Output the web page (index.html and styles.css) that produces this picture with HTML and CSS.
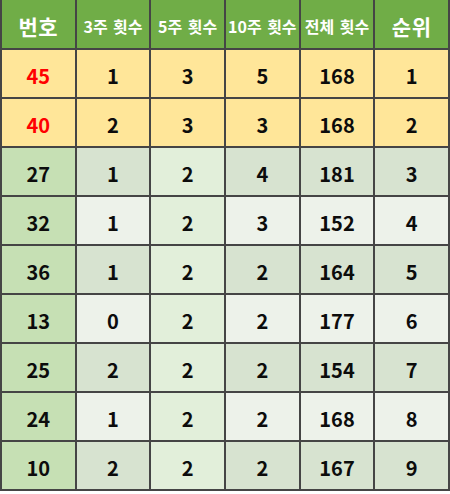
FILE: index.html
```html
<!DOCTYPE html>
<html lang="ko">
<head>
<meta charset="utf-8">
<link rel="stylesheet" href="styles.css">
</head>
<body>
<div class="grid">
  <div class="c head big">번호</div>
  <div class="c head">3주 횟수</div>
  <div class="c head">5주 횟수</div>
  <div class="c head">10주 횟수</div>
  <div class="c head">전체 횟수</div>
  <div class="c head big">순위</div>

  <div class="c y red">45</div><div class="c y">1</div><div class="c y">3</div><div class="c y">5</div><div class="c y">168</div><div class="c y">1</div>
  <div class="c y red">40</div><div class="c y">2</div><div class="c y">3</div><div class="c y">3</div><div class="c y">168</div><div class="c y">2</div>

  <div class="c num">27</div><div class="c d">1</div><div class="c g">2</div><div class="c d">4</div><div class="c d">181</div><div class="c d">3</div>
  <div class="c num">32</div><div class="c l">1</div><div class="c g">2</div><div class="c l">3</div><div class="c l">152</div><div class="c l">4</div>
  <div class="c num">36</div><div class="c d">1</div><div class="c g">2</div><div class="c d">2</div><div class="c d">164</div><div class="c d">5</div>
  <div class="c num">13</div><div class="c l">0</div><div class="c g">2</div><div class="c l">2</div><div class="c l">177</div><div class="c l">6</div>
  <div class="c num">25</div><div class="c d">2</div><div class="c g">2</div><div class="c d">2</div><div class="c d">154</div><div class="c d">7</div>
  <div class="c num">24</div><div class="c l">1</div><div class="c g">2</div><div class="c l">2</div><div class="c l">168</div><div class="c l">8</div>
  <div class="c num">10</div><div class="c d">2</div><div class="c g">2</div><div class="c d">2</div><div class="c d">167</div><div class="c d">9</div>
</div>
</body>
</html>
```
FILE: styles.css
```css
html, body {
  margin: 0;
  padding: 0;
  background: #ffffff;
}
body {
  font-family: "Noto Sans CJK KR", "Noto Sans", sans-serif;
}
.grid {
  width: 450px;
  box-sizing: border-box;
  display: grid;
  grid-template-columns: repeat(6, 1fr);
  grid-template-rows: 48px repeat(9, 47px);
  gap: 2px;
  padding: 0 2px 2px 2px;
  background: #454545;
}
.c {
  display: flex;
  align-items: center;
  justify-content: center;
  padding-top: 4px;
  box-sizing: border-box;
  font-weight: 700;
  font-size: 20px;
  color: #0c0c0c;
  white-space: nowrap;
}
.head {
  background: #70ad47;
  color: #ffffff;
  font-size: 16px;
  letter-spacing: 0;
  word-spacing: 1px;
}
.head.big {
  font-size: 21px;
  letter-spacing: 0.5px;
}
.y { background: #ffe699; }
.red { color: #ff0000; }
.num { background: #c6e0b4; }
.d { background: #d7e3d0; }
.l { background: #edf2ea; }
.g { background: #e2efda; }
```
